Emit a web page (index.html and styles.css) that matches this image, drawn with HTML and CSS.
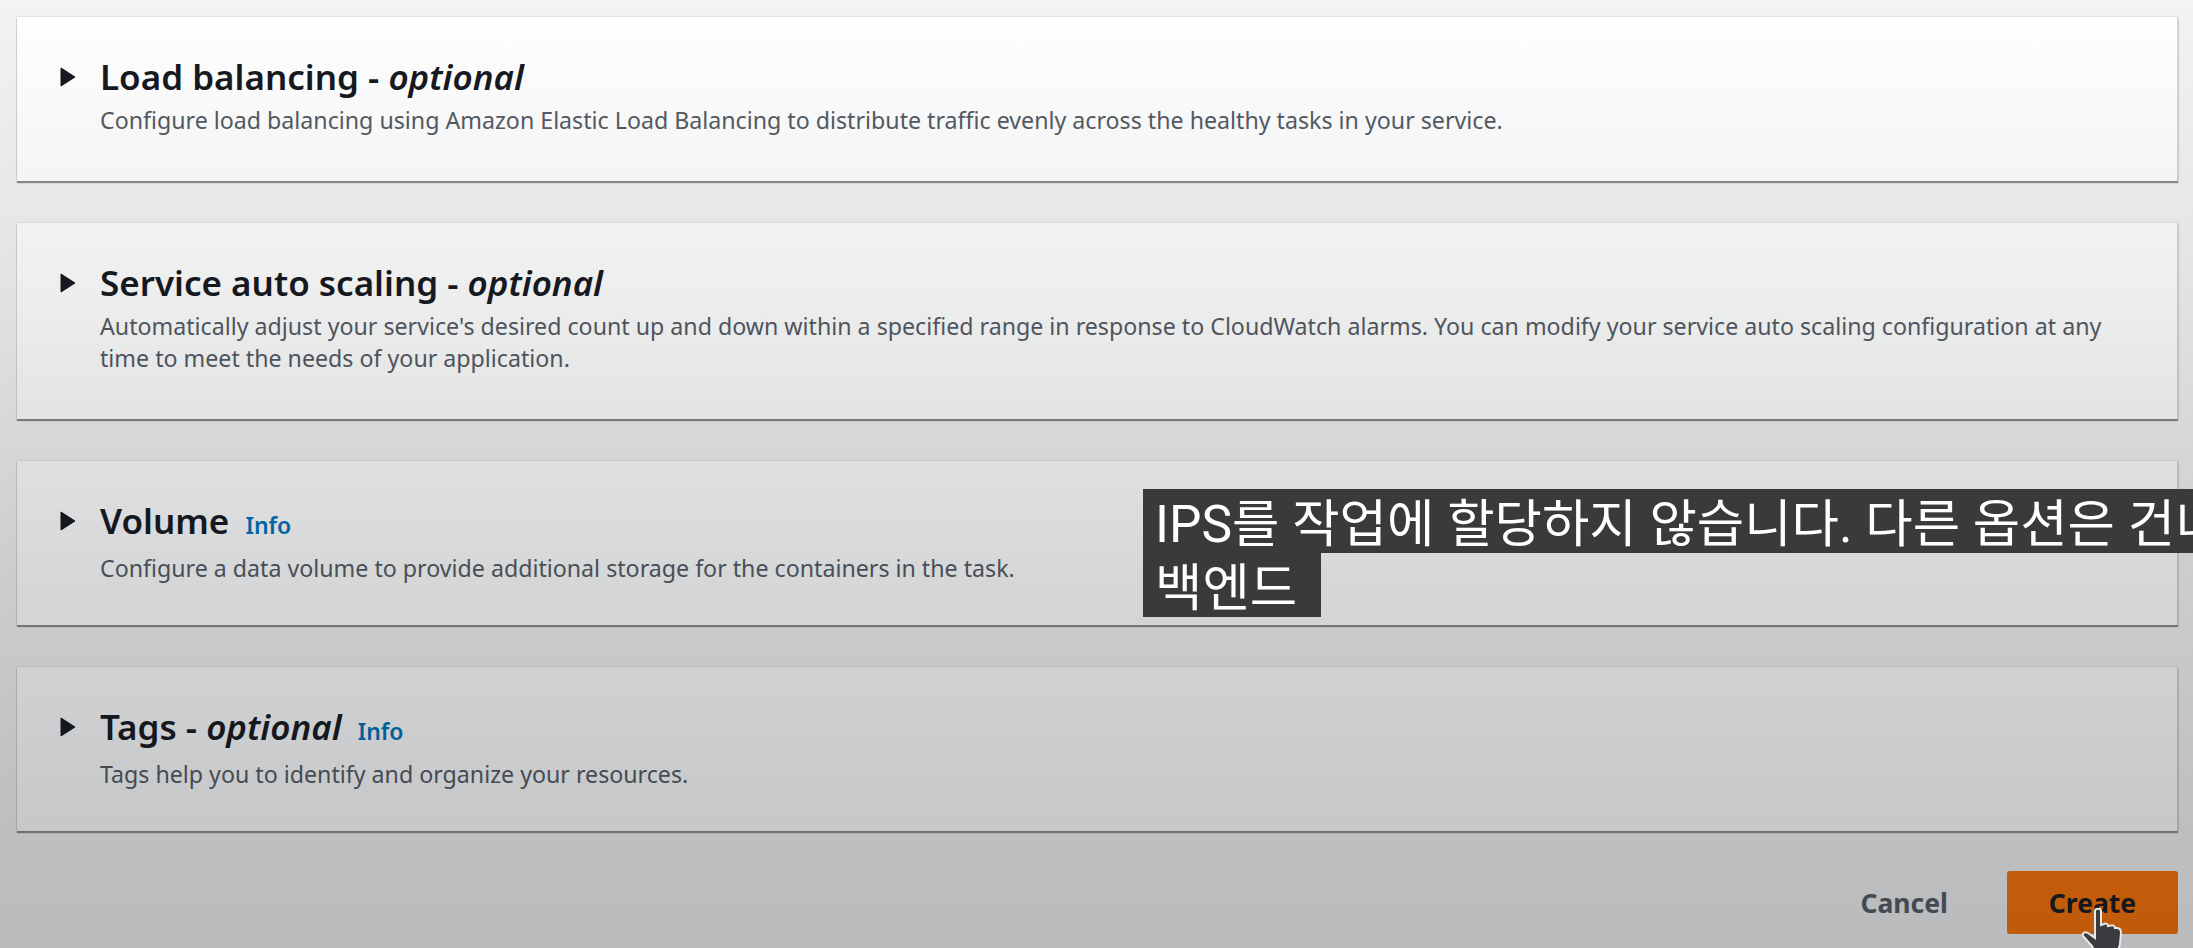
FILE: index.html
```html
<!DOCTYPE html>
<html lang="en">
<head>
    <meta charset="UTF-8">
    <title>Create service</title>
    <link rel="stylesheet" href="styles.css">
</head>
<body>

<div class="page">
    <section class="panel panel-one-line">
        <svg class="caret" viewBox="0 0 16 20"><path d="M1 1 L15 10 L1 19 Z"/></svg>
        <div class="panel-text">
            <h2>Load balancing - <em>optional</em></h2>
            <p>Configure load balancing using Amazon Elastic Load Balancing to distribute traffic evenly across the healthy tasks in your service.</p>
        </div>
    </section>

    <section class="panel">
        <svg class="caret" viewBox="0 0 16 20"><path d="M1 1 L15 10 L1 19 Z"/></svg>
        <div class="panel-text">
            <h2>Service auto scaling - <em>optional</em></h2>
            <p>Automatically adjust your service's desired count up and down within a specified range in response to CloudWatch alarms. You can modify your service auto scaling configuration at any time to meet the needs of your application.</p>
        </div>
    </section>

    <section class="panel panel-one-line">
        <svg class="caret" viewBox="0 0 16 20"><path d="M1 1 L15 10 L1 19 Z"/></svg>
        <div class="panel-text">
            <h2>Volume <a class="info">Info</a></h2>
            <p>Configure a data volume to provide additional storage for the containers in the task.</p>
        </div>
    </section>

    <section class="panel panel-one-line">
        <svg class="caret" viewBox="0 0 16 20"><path d="M1 1 L15 10 L1 19 Z"/></svg>
        <div class="panel-text">
            <h2>Tags - <em>optional</em> <a class="info">Info</a></h2>
            <p>Tags help you to identify and organize your resources.</p>
        </div>
    </section>

    <div class="button-container">
        <button type="button" class="cancel-button">Cancel</button>
        <button type="button" class="create-button">Create</button>
    </div>
</div>

<!-- video player shadow on top of the page -->
<div class="shade"></div>

<div class="caption">
    <span class="caption-line">IPS를 작업에 할당하지 않습니다. 다른 옵션은 건너</span>
    <span class="caption-line">백엔드</span>
</div>

<svg class="hand" viewBox="0 0 40 48">
    <path d="M13 3 C13 0 19 0 19 3 L19 17 L22 16 C24 15 26 16 26 18 L29 17.5 C31 17 33 18 33 20 L35 20 C38 20 39 22 39 25 L38 36 L35 47 L14 47 L10 38 L1 28 C0 25 3 23 6 25 L13 30 Z" fill="#3a3c3f" stroke="#e8e8e8" stroke-width="2"/>
</svg>

</body>
</html>
```

FILE: styles.css
```css
html, body {
    height: 948px;
    margin: 0;
    padding: 0;
    overflow: hidden;
    background-color: #f2f3f3;
    font-family: "Noto Sans", Arial, sans-serif;
}

.page {
    display: flex;
    flex-direction: column;
    gap: 42px;
    padding: 17px 15px 0 17px;
}

.panel {
    display: flex;
    gap: 24px;
    height: 196px;
    box-sizing: border-box;
    padding: 40px 40px 0 43px;
    background-color: #fff;
    border-right: 1px solid #d5d5d5;
    box-shadow: 0 2px 1px rgba(60, 60, 60, 0.55), 0 0 2px rgba(60, 60, 60, 0.25);
}

.panel-one-line {
    height: 164px;
}

.caret {
    width: 16px;
    height: 20px;
    margin-top: 10px;
    flex: none;
    fill: #16191f;
    stroke: #16191f;
    stroke-width: 1;
    stroke-linejoin: round;
}

.panel-text h2 {
    margin: 0;
    font-size: 35px;
    line-height: 40px;
    font-weight: 600;
    color: #16191f;
}

.panel-text em {
    font-weight: 600;
}

.panel-text p {
    margin: 7px 0 0;
    font-size: 23.2px;
    line-height: 32px;
    color: #545b64;
}

.info {
    margin-left: 7px;
    font-size: 23px;
    font-weight: 600;
    color: #0073bb;
}

.button-container {
    display: flex;
    justify-content: flex-end;
    align-items: center;
    gap: 59px;
    margin-top: -2px;
}

button {
    border: none;
    border-radius: 3px;
    padding: 0;
    font-family: inherit;
    font-size: 26.5px;
    font-weight: 700;
    height: 63px;
}

.cancel-button {
    background: none;
    color: #545b64;
}

.create-button {
    width: 171px;
    background-color: #fb7305;
    color: #16191f;
}

.shade {
    position: absolute;
    inset: 0;
    background: linear-gradient(to bottom, rgba(15, 20, 25, 0) 0%, rgba(15, 20, 25, 0.07) 30%, rgba(15, 20, 25, 0.17) 60%, rgba(15, 20, 25, 0.23) 85%, rgba(15, 20, 25, 0.25) 100%);
}

.caption {
    position: absolute;
    left: 1143px;
    top: 489px;
    display: flex;
    flex-direction: column;
    align-items: flex-start;
    font-family: Roboto, "Noto Sans CJK KR", sans-serif;
    font-size: 51.5px;
    line-height: 56px;
    color: #fff;
    white-space: nowrap;
}

.caption-line {
    padding: 8px 24px 0 12px;
    background-color: #3a3a3a;
}

.hand {
    position: absolute;
    left: 2082px;
    top: 908px;
    width: 40px;
    height: 48px;
}
```
